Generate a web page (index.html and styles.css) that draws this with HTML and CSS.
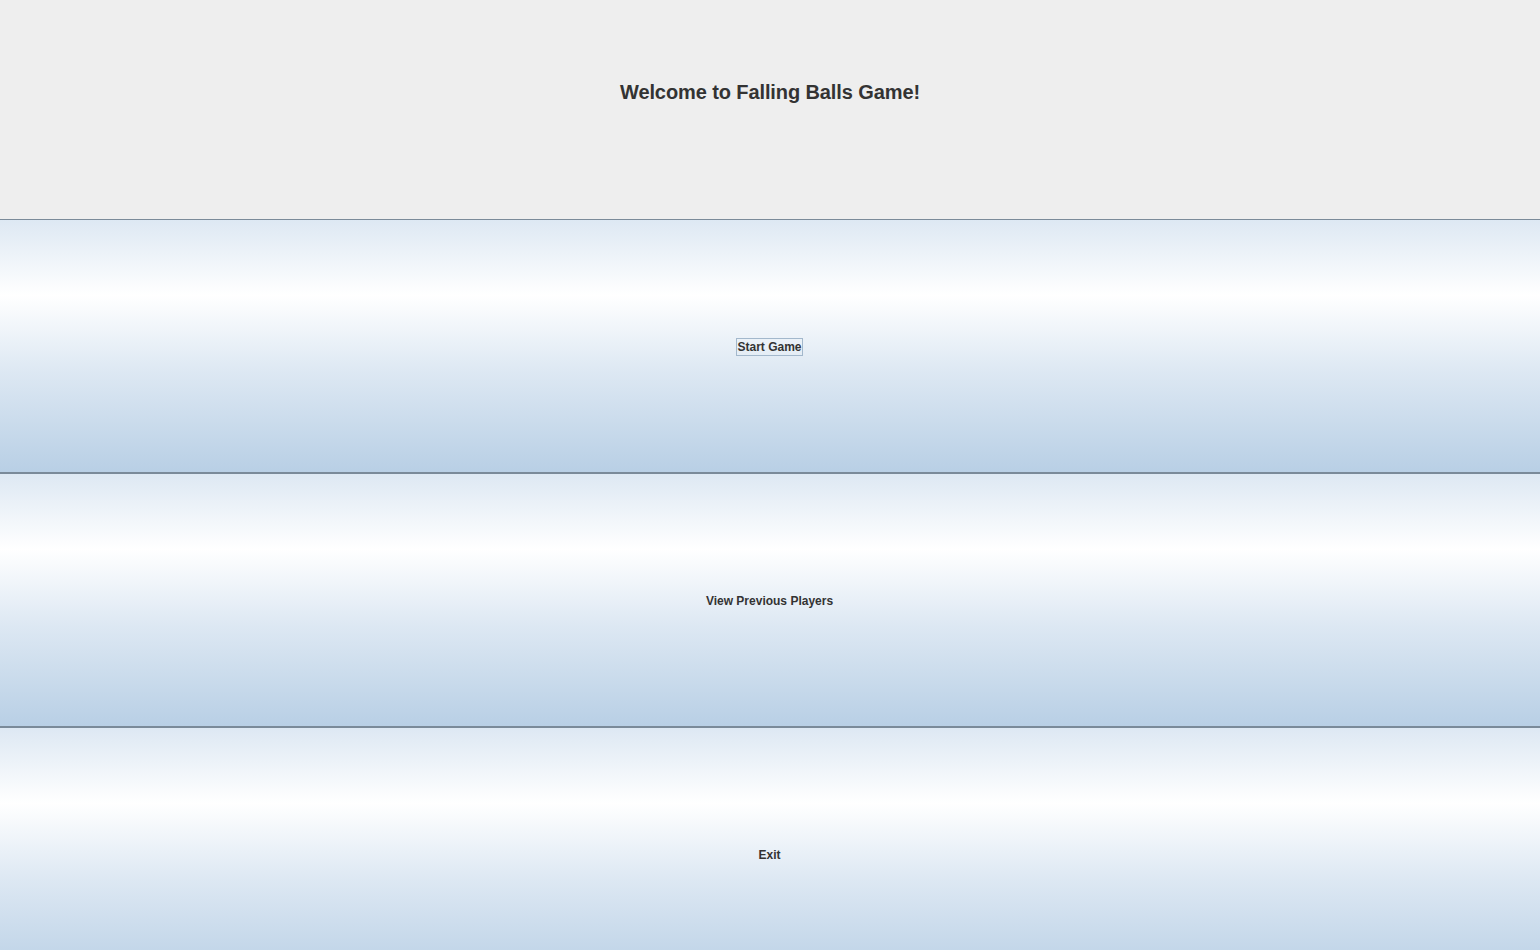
FILE: index.html
```html
<!DOCTYPE html>
<html>
<head>
<meta charset="utf-8">
<title>Falling Balls Game</title>
<link rel="stylesheet" href="styles.css">
</head>
<body>
<div class="frame">
  <header class="header">
    <h1 class="title">Welcome to Falling Balls Game!</h1>
  </header>
  <div class="menu">
    <button class="menu-btn"><span class="label focused">Start Game</span></button>
    <button class="menu-btn"><span class="label">View Previous Players</span></button>
    <button class="menu-btn"><span class="label">Exit</span></button>
  </div>
</div>
</body>
</html>
```
FILE: styles.css
```css
html, body {
  margin: 0;
  padding: 0;
  width: 1540px;
  height: 950px;
  overflow: hidden;
  background: #eeeeee;
  font-family: "Liberation Sans", Arial, sans-serif;
}

.frame {
  display: flex;
  flex-direction: column;
  width: 1540px;
}

.header {
  height: 219px;
  box-sizing: border-box;
  background: #eeeeee;
  display: flex;
  justify-content: center;
  align-items: flex-start;
  padding-top: 81px;
}

.title {
  margin: 0;
  font-size: 20px;
  line-height: 23px;
  font-weight: bold;
  letter-spacing: -0.1px;
  color: #333333;
}

.menu {
  display: flex;
  flex-direction: column;
}

.menu-btn {
  display: flex;
  align-items: center;
  justify-content: center;
  flex: 0 0 auto;
  height: 254px;
  width: 1540px;
  box-sizing: border-box;
  margin: 0;
  padding: 2px 1px 0 0;
  border: none;
  border-top: 1px solid #7a8a99;
  border-bottom: 1px solid #7a8a99;
  background-origin: border-box;
  background-image: linear-gradient(to bottom,
    #dde8f3 0%,
    #ffffff 30%,
    #dde8f3 60%,
    #b8cfe5 100%);
  font-family: "Liberation Sans", Arial, sans-serif;
  font-size: 12px;
  font-weight: bold;
  color: #333333;
  cursor: default;
}

.label {
  display: inline-block;
  line-height: 16px;
  border: 1px solid transparent;
}

.label.focused {
  border-color: #a3b8cc;
}
```
